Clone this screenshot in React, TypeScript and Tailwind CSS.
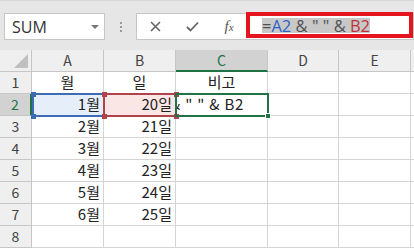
import React from 'react';

const cols = [
  { label: 'A', w: 'w-[72px]' },
  { label: 'B', w: 'w-[72px]' },
  { label: 'C', w: 'w-[92px]' },
  { label: 'D', w: 'w-[71px]' },
  { label: 'E', w: 'w-[72px]' },
];

const rows: string[][] = [
  ['월', '일', '비고'],
  ['1월', '20일', ''],
  ['2월', '21일', ''],
  ['3월', '22일', ''],
  ['4월', '23일', ''],
  ['5월', '24일', ''],
  ['6월', '25일', ''],
  ['', '', ''],
];

const font = { fontFamily: '"Noto Sans CJK KR", "Noto Sans", sans-serif' };

function Handle({ className }: { className: string }) {
  return <div className={`absolute w-[5px] h-[5px] ${className}`} />;
}

export default function App() {
  return (
    <div className="w-[414px] h-[249px] overflow-hidden bg-white relative" style={font}>
      {/* formula bar */}
      <div className="h-[50px] bg-[#e6e6e6] flex items-start pt-[12px] pl-[4px] border-t border-[#d9d9d9]">
        <div className="w-[101px] h-[27px] bg-white border border-[#c6c6c6] flex items-center pl-[7px] pr-[5px] justify-between">
          <span className="text-[16px] text-[#333] leading-none" style={{ fontFamily: '"Open Sans", sans-serif' }}>SUM</span>
          <span className="w-0 h-0 border-l-[4px] border-r-[4px] border-t-[4px] border-l-transparent border-r-transparent border-t-[#777]" />
        </div>
        <div className="w-[31px] h-[27px] flex flex-col items-center justify-center gap-[2px]">
          <span className="w-[2px] h-[2px] bg-[#9a9a9a]" />
          <span className="w-[2px] h-[2px] bg-[#9a9a9a]" />
          <span className="w-[2px] h-[2px] bg-[#9a9a9a]" />
        </div>
        <div className="flex-1 h-[27px] bg-white border border-[#c6c6c6] flex items-center relative">
          <div className="w-[36px] flex justify-center">
            <svg width="11" height="11" viewBox="0 0 11 11">
              <path d="M1 1 L10 10 M10 1 L1 10" stroke="#666" strokeWidth="1.6" />
            </svg>
          </div>
          <div className="w-[38px] flex justify-center">
            <svg width="13" height="11" viewBox="0 0 13 11">
              <path d="M1 6 L4.5 9.5 L12 1.5" stroke="#666" strokeWidth="1.8" fill="none" />
            </svg>
          </div>
          <div className="w-[36px] flex justify-center">
            <span className="text-[15px] italic text-[#555] leading-none" style={{ fontFamily: '"Liberation Serif", serif' }}>
              f<span className="text-[11px]">x</span>
            </span>
          </div>
          <div className="absolute left-[109px] top-[-2px] w-[167px] h-[26px] border-[4px] border-[#e4151f] bg-white flex items-center pl-[12px]">
            <span
              className="bg-[#c8c8c8] text-[16.5px] leading-[15px] h-[15px] text-[#505050] whitespace-pre"
              style={{ fontFamily: '"Open Sans", sans-serif' }}
            >
              =<span className="text-[#2f62c4]">A2</span> &amp; " " &amp; <span className="text-[#c0313a]">B2</span>
            </span>
          </div>
        </div>
      </div>

      {/* column headers */}
      <div className="flex h-[22px] bg-[#efefef]">
        <div className="w-[32px] border-r border-b border-[#c6c6c6] relative">
          <svg className="absolute right-[3px] bottom-[3px]" width="14" height="14" viewBox="0 0 14 14">
            <path d="M14 0 L14 14 L0 14 Z" fill="#c0c0c0" />
          </svg>
        </div>
        {cols.map((c) =>
          c.label === 'C' ? (
            <div key={c.label} className={`${c.w} border-r border-[#c6c6c6] bg-[#d2d2d2] border-b-2 border-b-[#217346] flex items-center justify-center text-[14px] text-[#217346]`}>
              {c.label}
            </div>
          ) : (
            <div key={c.label} className={`${c.w} border-r border-b border-[#c6c6c6] flex items-center justify-center text-[14px] text-[#444]`}>
              {c.label}
            </div>
          )
        )}
        <div className="flex-1 border-b border-[#c6c6c6]" />
      </div>

      {/* rows */}
      <div className="relative">
        {rows.map((r, i) => (
          <div key={i} className="flex h-[22px]">
            <div
              className={`w-[32px] flex items-center justify-center text-[14px] border-b border-[#c6c6c6] ${
                i === 1 ? 'bg-[#d2d2d2] text-[#217346] border-r-2 border-r-[#217346]' : 'bg-[#efefef] text-[#444] border-r border-r-[#c6c6c6]'
              }`}
            >
              {i + 1}
            </div>
            {cols.map((c, j) => {
              const v = r[j] ?? '';
              const editing = i === 1 && j === 2;
              let bg = '';
              if (i === 1 && j === 0) bg = 'bg-[#e6eefa]';
              if (i === 1 && j === 1) bg = 'bg-[#fbe6e6]';
              const align = editing ? 'justify-start' : i === 0 ? 'justify-center' : 'justify-end pr-[3px]';
              return (
                <div
                  key={c.label}
                  className={`${c.w} border-r border-b border-[#d4d4d4] flex items-center text-[15px] text-[#222] overflow-hidden whitespace-pre ${bg} ${align}`}
                >
                  {editing ? <span className="shrink-0 ml-[-6px] tracking-[0.8px]">&amp; " " &amp; B2</span> : v}
                </div>
              );
            })}
            <div className="flex-1 border-b border-[#d4d4d4]" />
          </div>
        ))}

        {/* selection overlays */}
        <div className="absolute left-[32px] top-[21px] w-[73px] h-[24px] border-2 border-[#3b6cb4]" />
        <Handle className="left-[31px] top-[20px] bg-[#3b6cb4]" />
        <Handle className="left-[31px] top-[42px] bg-[#3b6cb4]" />
        <div className="absolute left-[103px] top-[21px] w-[74px] h-[24px] border-2 border-[#b2424a]" />
        <Handle className="left-[102px] top-[20px] bg-[#b2424a]" />
        <Handle className="left-[102px] top-[42px] bg-[#b2424a]" />
        <Handle className="left-[174px] top-[20px] bg-[#b2424a]" />
        <Handle className="left-[174px] top-[42px] bg-[#b2424a]" />
        <div className="absolute left-[175px] top-[21px] w-[94px] h-[24px] border-2 border-[#217346]" />
        <div className="absolute left-[265px] top-[41px] w-[6px] h-[6px] bg-[#217346] border border-white" />
      </div>
    </div>
  );
}
